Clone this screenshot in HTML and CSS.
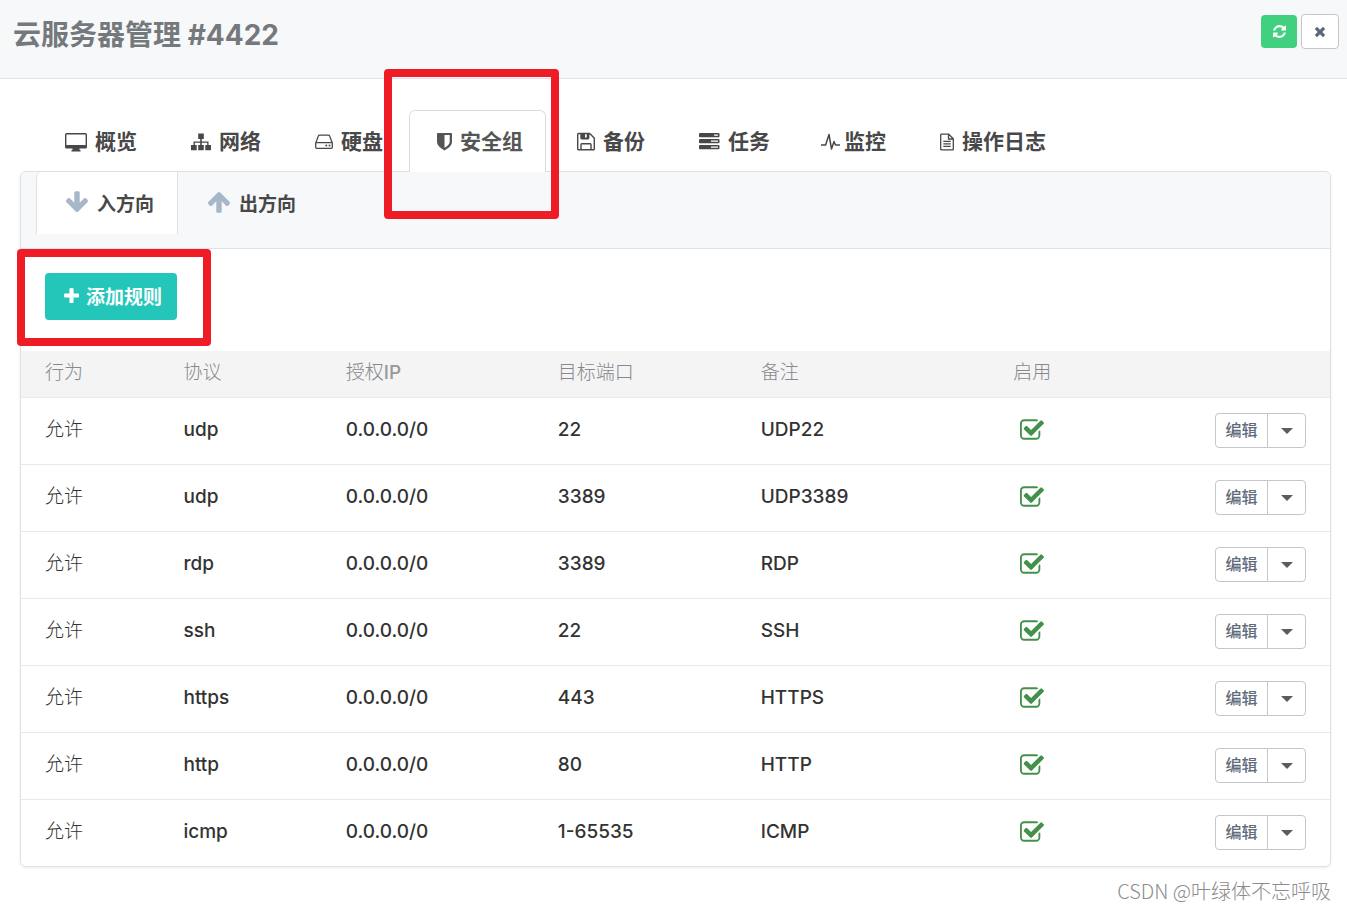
FILE: index.html
```html
<!DOCTYPE html>
<html lang="zh-CN">
<head>
<meta charset="utf-8">
<meta name="viewport" content="width=device-width, initial-scale=1">
<title>云服务器管理 #4422</title>
<link rel="stylesheet" href="styles.css">
</head>
<body>
<svg class="sprite" aria-hidden="true">
  <symbol id="check" viewBox="64 128 1664 1408"><path d="M1472 930v318q0 119-84.5 203.5t-203.5 84.5h-832q-119 0-203.5-84.5t-84.5-203.5v-832q0-119 84.5-203.5t203.5-84.5h832q63 0 117 25 15 7 18 23 3 17-9 29l-49 49q-10 10-23 10-3 0-9-2-23-6-45-6h-832q-66 0-113 47t-47 113v832q0 66 47 113t113 47h832q66 0 113-47t47-113v-254q0-13 9-22l64-64q10-10 23-10 6 0 12 3 20 8 20 29zm231-489l-814 814q-24 24-57 24t-57-24l-430-430q-24-24-24-57t24-57l110-110q24-24 57-24t57 24l263 263 647-647q24-24 57-24t57 24l110 110q24 24 24 57t-24 57z"/></symbol>
  <symbol id="arrow" viewBox="117 128 1558 1536"><path d="M1675 971q0 51-37 90l-75 75q-38 38-91 38-54 0-90-38l-294-293v704q0 52-37.5 84.5t-90.5 32.5h-128q-53 0-90.5-32.5t-37.5-84.5v-704l-294 293q-36 38-90 38t-90-38l-75-75q-38-38-38-90 0-53 38-91l651-651q35-37 90-37 54 0 91 37l651 651q37 39 37 91z"/></symbol>
</svg>

<header class="topbar">
  <h1 class="title">云服务器管理 #4422</h1>
  <div class="actions">
    <button class="square square-green" type="button" aria-label="刷新">
      <svg width="13" height="13" viewBox="0 128 1536 1536"><path d="M1511 1056q0 5-1 7-64 268-268 434.500t-478 166.500q-146 0-282.500-55t-243.500-157l-129 129q-19 19-45 19t-45-19-19-45v-448q0-26 19-45t45-19h448q26 0 45 19t19 45-19 45l-137 137q71 66 161 102t187 36q134 0 250-65t186-179q11-17 53-117 8-23 30-23h192q13 0 22.500 9.500t9.500 22.500zm25-800v448q0 26-19 45t-45 19h-448q-26 0-45-19t-19-45 19-45l138-138q-148-137-349-137-134 0-250 65t-186 179q-11 17-53 117-8 23-30 23h-199q-13 0-22.500-9.500t-9.500-22.500v-7q65-268 270-434.500t480-166.500q146 0 284 55.500t245 156.500l130-129q19-19 45-19t45 19 19 45z"/></svg>
    </button>
    <button class="square square-plain" type="button" aria-label="关闭">
      <svg width="10" height="10" viewBox="302 366 1188 1188"><path d="M1490 1322q0 40-28 68l-136 136q-28 28-68 28t-68-28l-294-294-294 294q-28 28-68 28t-68-28l-136-136q-28-28-28-68t28-68l294-294-294-294q-28-28-28-68t28-68l136-136q28-28 68-28t68 28l294 294 294-294q28-28 68-28t68 28l136 136q28 28 28 68t-28 68l-294 294 294 294q28 28 28 68z"/></svg>
    </button>
  </div>
</header>

<main class="content">
  <nav class="tabs">
    <a class="tab" href="#overview"><svg width="22" height="20" viewBox="0 0 22 20"><path fill-rule="evenodd" d="M1.500 1h19a1.500 1.500 0 0 1 1.500 1.500v12.500a1.500 1.500 0 0 1-1.500 1.500h-6v1.500h1v1.500h-9v-1.500h1v-1.500h-6a1.500 1.500 0 0 1-1.500-1.500v-12.500a1.500 1.500 0 0 1 1.500-1.500zM1.400 2.400v10.600h19.200v-10.600z"/></svg>概览</a>
    <a class="tab" href="#network"><svg width="20" height="20" viewBox="0 0 20 20"><path d="M7.200 1.500h5.600v5.500h-2v2.500h6.700v3.500h2.500v5.200h-5.700v-5.200h1.900v-2.200h-5.400v2.200h2v5.200h-5.600v-5.200h2v-2.200h-5.400v2.200h1.900v5.200h-5.700v-5.200h2.500v-3.500h6.700v-2.500h-2z"/></svg>网络</a>
    <a class="tab" href="#disk"><svg width="18" height="20" viewBox="0 0 18 20"><g fill="none" stroke="currentColor" stroke-width="1.300"><path d="M.7 11.200l2.600-7.100q.3-.9 1.300-.9h8.800q1 0 1.300.9l2.600 7.100v4.100q0 1-1 1h-14.600q-1 0-1-1zM1 10.700h16"/></g><circle cx="11.300" cy="13.500" r="1"/><circle cx="14.500" cy="13.500" r="1"/></svg>硬盘</a>
    <a class="tab tab-active" href="#security" aria-current="page"><svg width="15" height="20" viewBox="0 0 15 20"><path fill-rule="evenodd" d="M1 1h13q1 0 1 1v8q0 4.500-7.500 8.500q-7.500-4-7.500-8.500v-8q0-1 1-1zM7.500 3v12.800q5.200-3 5.200-6v-6.800z"/></svg>安全组<span class="mark mark-tab" aria-hidden="true"></span></a>
    <a class="tab" href="#backup"><svg width="18" height="20" viewBox="0 0 18 20"><g fill="none" stroke="currentColor" stroke-width="1.400"><path d="M1.500 1.500h10.600q.6 0 1.200.6l3.300 3.300q.7.600.7 1.300v10.300q0 .8-.8.800h-15q-.8 0-.8-.8v-14.700q0-.8.8-.8zM4 17.500v-5q0-.8.8-.8h8.400q.8 0 .8.800v5M4 1.500v4.500q0 .7.700.7h6.300q.7 0 .7-.7v-4.500"/></g><path d="M4 1.500h4v5.200h-4zM8 5.500h3.500v1.200h-3.500zM9.700 1.500h2v5h-2z"/></svg>备份</a>
    <a class="tab" href="#tasks"><svg width="21" height="20" viewBox="0 0 21 20"><path fill-rule="evenodd" d="M1 1h18.500q1 0 1 1v2.200q0 1-1 1h-18.500q-1 0-1-1v-2.200q0-1 1-1zM15 2.500h4v1.200h-4zM1 7h18.500q1 0 1 1v2.200q0 1-1 1h-18.500q-1 0-1-1v-2.200q0-1 1-1zM12 8.500h7v1.200h-7zM1 13h18.500q1 0 1 1v2.200q0 1-1 1h-18.500q-1 0-1-1v-2.200q0-1 1-1zM12 14.500h7v1.200h-7z"/></svg>任务</a>
    <a class="tab tab-tight" href="#monitor"><svg width="20" height="20" viewBox="3 0 20 20"><path fill="none" stroke="currentColor" stroke-width="1.500" stroke-linejoin="round" d="M0 13h4.600l3.400-10.500 2.500 14.500 2.500-7.500 1.500 3.500h4.500"/></svg>监控</a>
    <a class="tab" href="#logs"><svg width="14" height="20" viewBox="0 0 14 20"><path fill="none" stroke="currentColor" stroke-width="1.300" d="M1.500 2.200h7.200l4.600 4.600v10.400q0 .6-.6.600h-11.400q-.6 0-.6-.6v-14.400q0-.6.800-.6zM8.500 2.200v4.800h4.800M3.300 9.300h7.400M3.300 11.800h7.400M3.300 14.300h7.400"/></svg>操作日志</a>
  </nav>

  <section class="panel">
    <nav class="subtabs">
      <a class="subtab subtab-active" href="#in"><svg class="down" width="22" height="22"><use href="#arrow"/></svg>入方向</a>
      <a class="subtab" href="#out"><svg width="22" height="22"><use href="#arrow"/></svg>出方向</a>
    </nav>
    <div class="toolbar">
      <button class="add" type="button"><svg width="15" height="15" viewBox="192 128 1408 1408"><path d="M1600 736v192q0 40-28 68t-68 28h-416v416q0 40-28 68t-68 28h-192q-40 0-68-28t-28-68v-416h-416q-40 0-68-28t-28-68v-192q0-40 28-68t68-28h416v-416q0-40 28-68t68-28h192q40 0 68 28t28 68v416h416q40 0 68 28t28 68z"/></svg>添加规则<span class="mark mark-add" aria-hidden="true"></span></button>
    </div>
    <table class="rules">
      <colgroup><col class="c-action"><col class="c-protocol"><col class="c-ip"><col class="c-port"><col class="c-note"><col class="c-enabled"><col></colgroup>
      <thead><tr><th>行为</th><th>协议</th><th>授权<span class="latin">IP</span></th><th>目标端口</th><th>备注</th><th>启用</th><td></td></tr></thead>
      <tbody>
        <tr><td>允许</td><td>udp</td><td>0.0.0.0/0</td><td>22</td><td>UDP22</td><td class="on"><svg width="24" height="21" role="img" aria-label="已启用"><use href="#check"/></svg></td><td class="ops"><div class="split"><button class="edit" type="button">编辑</button><button class="more" type="button" aria-label="更多"></button></div></td></tr>
        <tr><td>允许</td><td>udp</td><td>0.0.0.0/0</td><td>3389</td><td>UDP3389</td><td class="on"><svg width="24" height="21" role="img" aria-label="已启用"><use href="#check"/></svg></td><td class="ops"><div class="split"><button class="edit" type="button">编辑</button><button class="more" type="button" aria-label="更多"></button></div></td></tr>
        <tr><td>允许</td><td>rdp</td><td>0.0.0.0/0</td><td>3389</td><td>RDP</td><td class="on"><svg width="24" height="21" role="img" aria-label="已启用"><use href="#check"/></svg></td><td class="ops"><div class="split"><button class="edit" type="button">编辑</button><button class="more" type="button" aria-label="更多"></button></div></td></tr>
        <tr><td>允许</td><td>ssh</td><td>0.0.0.0/0</td><td>22</td><td>SSH</td><td class="on"><svg width="24" height="21" role="img" aria-label="已启用"><use href="#check"/></svg></td><td class="ops"><div class="split"><button class="edit" type="button">编辑</button><button class="more" type="button" aria-label="更多"></button></div></td></tr>
        <tr><td>允许</td><td>https</td><td>0.0.0.0/0</td><td>443</td><td>HTTPS</td><td class="on"><svg width="24" height="21" role="img" aria-label="已启用"><use href="#check"/></svg></td><td class="ops"><div class="split"><button class="edit" type="button">编辑</button><button class="more" type="button" aria-label="更多"></button></div></td></tr>
        <tr><td>允许</td><td>http</td><td>0.0.0.0/0</td><td>80</td><td>HTTP</td><td class="on"><svg width="24" height="21" role="img" aria-label="已启用"><use href="#check"/></svg></td><td class="ops"><div class="split"><button class="edit" type="button">编辑</button><button class="more" type="button" aria-label="更多"></button></div></td></tr>
        <tr><td>允许</td><td>icmp</td><td>0.0.0.0/0</td><td>1-65535</td><td>ICMP</td><td class="on"><svg width="24" height="21" role="img" aria-label="已启用"><use href="#check"/></svg></td><td class="ops"><div class="split"><button class="edit" type="button">编辑</button><button class="more" type="button" aria-label="更多"></button></div></td></tr>
      </tbody>
    </table>
  </section>
  <footer class="watermark">CSDN @叶绿体不忘呼吸</footer>
</main>
</body>
</html>
```

FILE: styles.css
```css
* { box-sizing: border-box; }

body {
  margin: 0;
  background: #fff;
  color: #333;
  font-family: Inter, "Noto Sans CJK SC", sans-serif;
  font-size: 19px;
}

svg { fill: currentColor; flex: none; overflow: visible; }
.sprite { position: absolute; width: 0; height: 0; }
button { font-family: inherit; cursor: pointer; }
a { color: inherit; text-decoration: none; }

.topbar {
  display: flex;
  justify-content: space-between;
  align-items: flex-start;
  height: 79px;
  padding: 14px 8px 0 13px;
  background: #f7f8fa;
  border-bottom: 1px solid #dee2e6;
}
.title {
  margin: 0;
  font-size: 28px;
  line-height: 42px;
  font-weight: 700;
  color: #75797c;
}
.actions { display: flex; align-items: center; gap: 4px; }
.square {
  display: flex;
  align-items: center;
  justify-content: center;
  padding: 0;
  border-radius: 4px;
}
.square-green { width: 36px; height: 33px; border: 0; background: #41d080; color: #fff; }
.square-plain { width: 38px; height: 35px; border: 1px solid #c4c6ca; background: #fff; color: #5a6878; }

.content { padding: 31px 16px 0 20px; }

.tabs { display: flex; padding-left: 17px; }
.tab {
  position: relative;
  display: flex;
  align-items: center;
  gap: 8px;
  height: 62px;
  margin: 0 3px -1px 0;
  padding: 0 22px 0 27px;
  border: 1px solid transparent;
  border-bottom: 0;
  border-radius: 6px 6px 0 0;
  font-size: 21px;
  line-height: 30px;
  font-weight: 700;
  color: #484848;
  white-space: nowrap;
}
.tab-active { border-color: #dadcde; background: #fff; color: #555; z-index: 1; }
.tab-tight { gap: 0; }

.mark {
  position: absolute;
  z-index: 2;
  border: 8px solid #ee1c25;
  border-radius: 4px;
  pointer-events: none;
}
.mark-tab { inset: -42px -14px -47px -26px; }
.mark-add { inset: -24px -34px -26px -28px; }

.panel {
  border: 1px solid #dee2e6;
  border-radius: 6px;
  box-shadow: 0 1px 3px rgba(0, 0, 0, .08);
}
.subtabs {
  display: flex;
  height: 77px;
  padding-left: 15px;
  background: #f7f8fa;
  border-bottom: 1px solid #dee2e6;
  border-radius: 6px 6px 0 0;
}
.subtab {
  display: flex;
  align-items: center;
  gap: 9px;
  height: 62px;
  padding: 0 23px 2px 29px;
  border: 1px solid transparent;
  border-width: 0 1px;
  font-weight: 700;
  color: #484848;
}
.subtab svg { color: #a5b7c9; }
.subtab-active { border-color: #dee2e6; border-radius: 6px 0 0 0; background: #fff; }
.down { transform: rotate(180deg); }

.toolbar { padding: 24px 24px 31px; }
.add {
  position: relative;
  display: flex;
  align-items: center;
  gap: 7px;
  height: 47px;
  padding: 0 15px 3px 19px;
  border: 0;
  border-radius: 4px;
  background: #23c6b8;
  color: #fff;
  font-size: 19px;
  font-weight: 700;
}

.rules { width: 100%; table-layout: fixed; border-collapse: collapse; }
.c-action { width: 11.800%; }
.c-protocol { width: 12.400%; }
.c-ip { width: 16.200%; }
.c-port { width: 15.500%; }
.c-note { width: 19.300%; }
.c-enabled { width: 12%; }
.rules th, .rules td { padding: 0 8px; text-align: left; white-space: nowrap; line-height: 28px; }
.rules th:first-child, .rules td:first-child { padding-left: 24px; }
.rules thead { background: #f4f4f4; }
.rules thead tr { height: 46px; }
.rules th { padding-bottom: 1px; font-weight: 300; color: #85898d; }
.latin { font-weight: 500; color: #96999c; }
.rules tbody tr { height: 67px; border-top: 1px solid #e7eaec; }
.rules tbody td { padding-bottom: 2px; font-weight: 500; }
.rules tbody td:first-child { font-weight: 300; }
.rules .on { padding-left: 15px; padding-bottom: 3px; color: #43904a; }
.on svg { display: block; }
.rules tbody .ops { padding: 0 24px 0 0; }
.split { display: flex; justify-content: flex-end; }
.edit, .more {
  height: 35px;
  padding: 0;
  border: 1px solid #c4c6ca;
  background: #fff;
  color: #5f6c7b;
}
.edit { width: 53px; padding-bottom: 3px; border-radius: 4px 0 0 4px; font-size: 16px; font-weight: 500; }
.more {
  display: flex;
  align-items: center;
  justify-content: center;
  width: 39px;
  margin-left: -1px;
  border-radius: 0 4px 4px 0;
}
.more::before {
  content: "";
  border: 6px solid transparent;
  border-top-color: #5c5c5c;
  border-bottom: 0;
}

.watermark {
  padding-top: 9px;
  text-align: right;
  font-family: "Noto Sans CJK SC", sans-serif;
  font-size: 20px;
  line-height: 30px;
  font-weight: 300;
  color: #8c8c8c;
}
```
